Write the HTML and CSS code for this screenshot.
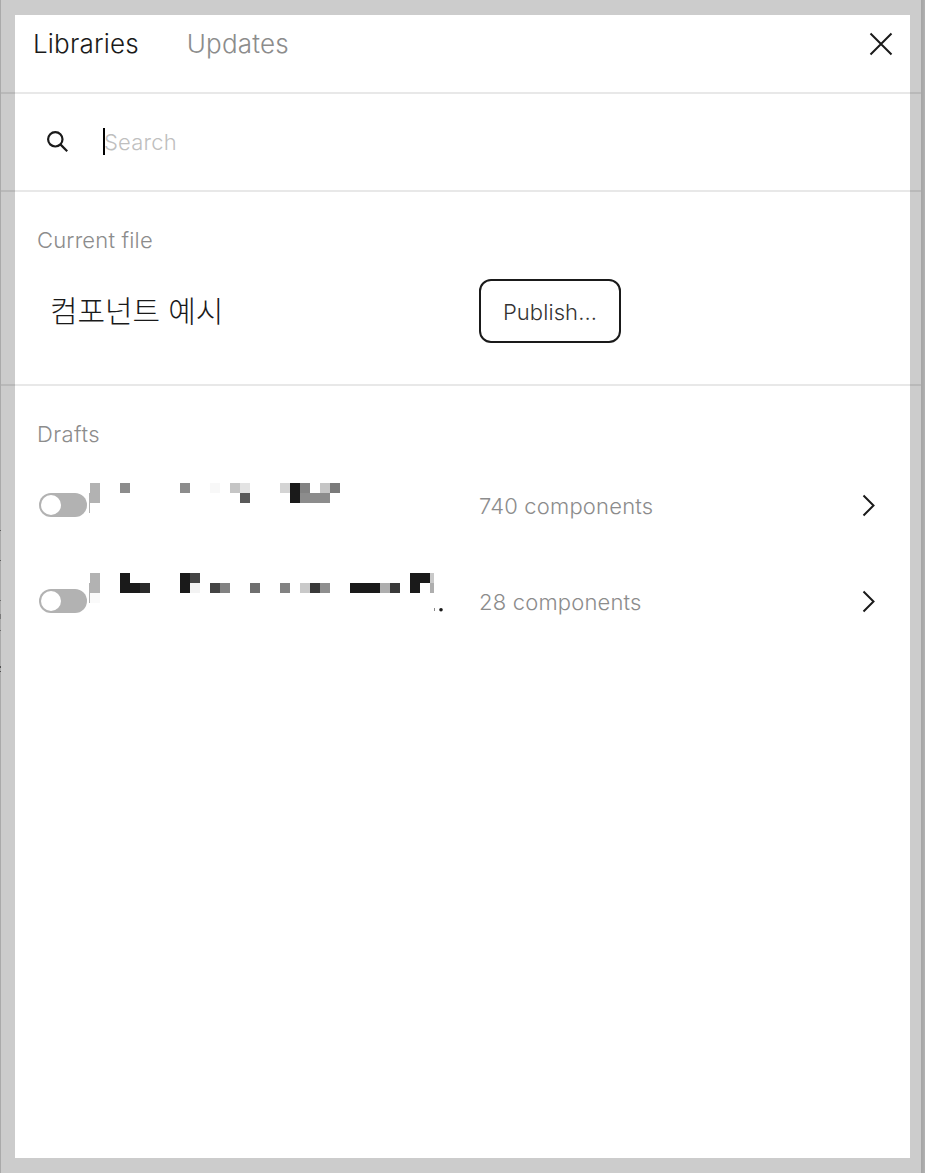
FILE: index.html
```html
<!DOCTYPE html>
<html lang="ko">
<head>
  <meta charset="UTF-8" />
  <meta name="viewport" content="width=device-width, initial-scale=1.0"/>
  <title>Libraries</title>
  <link rel="stylesheet" href="styles.css">
</head>
<body>
  <div class="modal">

    <header class="tabs">
      <span class="tab active">Libraries</span>
      <span class="tab">Updates</span>
      <svg class="close" width="24" height="24" viewBox="0 0 24 24">
        <path d="M1.5 1.5L22.5 22.5M22.5 1.5L1.5 22.5" />
      </svg>
    </header>

    <div class="search">
      <svg class="search-icon" width="24" height="24" viewBox="0 0 24 24">
        <circle cx="9.3" cy="9.3" r="7.2" />
        <path d="M14.4 14.4L21.2 21.2" />
      </svg>
      <span class="caret"></span>
      <span class="placeholder">Search</span>
    </div>

    <section class="current">
      <h2>Current file</h2>
      <div class="row">
        <span class="file-name">컴포넌트 예시</span>
        <button type="button" class="publish">Publish...</button>
      </div>
    </section>

    <section class="drafts">
      <h2>Drafts</h2>

      <div class="row draft">
        <div class="library">
          <span class="toggle"></span>
          <svg class="mosaic" width="360" height="48" viewBox="89 481 360 48" shape-rendering="crispEdges">
            <path fill="#b2b2b2" d="M90 483h10v20h-10zM89 493h1v20h-1z" />
            <path fill="#8c8c8c" d="M120 483h10v10h-10zM180 483h10v10h-10zM300 493h30v10h-30z" />
            <path fill="#f8f8f8" d="M210 483h10v10h-10z" />
            <path fill="#c5c5c5" d="M230 483h10v10h-10zM320 483h10v10h-10z" />
            <path fill="#e3e3e3" d="M240 483h10v10h-10z" />
            <path fill="#595959" d="M240 493h10v10h-10z" />
            <path fill="#d4d4d4" d="M280 483h10v10h-10z" />
            <path fill="#1a1a1a" d="M290 483h10v20h-10z" />
            <path fill="#828282" d="M300 483h10v10h-10z" />
            <path fill="#7a7a7a" d="M330 483h10v10h-10z" />
          </svg>
        </div>
        <span class="count">740 components</span>
        <svg class="chevron" width="14" height="24" viewBox="0 0 14 24">
          <path d="M1.5 2.5L11.5 12.5L1.5 22.5" />
        </svg>
      </div>

      <div class="row draft">
        <div class="library">
          <span class="toggle"></span>
          <svg class="mosaic" width="360" height="48" viewBox="89 577 360 48" shape-rendering="crispEdges">
            <path fill="#b2b2b2" d="M90 573h10v20h-10zM89 583h1v20h-1z" />
            <path fill="#fafafa" d="M90 593h10v10h-10z" />
            <path fill="#f3f3f3" d="M190 583h10v10h-10z" />
            <path fill="#1a1a1a" d="M120 573h10v10h10v10h-20zM180 573h10v20h-10zM350 583h30v10h-30zM410 573h20v10h-10v10h-10z" />
            <path fill="#2a2a2a" d="M140 583h10v10h-10z" />
            <path fill="#444" d="M190 573h10v10h-10zM210 583h10v10h-10z" />
            <path fill="#828282" d="M220 583h10v10h-10zM280 583h10v10h-10z" />
            <path fill="#6f6f6f" d="M250 583h10v10h-10z" />
            <path fill="#c9c9c9" d="M300 583h10v10h-10zM430 573h4v10h-4z" />
            <path fill="#393939" d="M310 583h10v10h-10zM390 583h10v10h-10z" />
            <path fill="#8e8e8e" d="M320 583h10v10h-10z" />
            <path fill="#aeaeae" d="M380 583h10v10h-10zM430 583h4v10h-4z" />
            <path fill="#888" d="M434 608h1v3h-1z" />
            <circle cx="441" cy="609.7" r="1.8" fill="#1a1a1a" shape-rendering="auto" />
          </svg>
        </div>
        <span class="count">28 components</span>
        <svg class="chevron" width="14" height="24" viewBox="0 0 14 24">
          <path d="M1.5 2.5L11.5 12.5L1.5 22.5" />
        </svg>
      </div>
    </section>

  </div>
  <div class="frame"></div>
</body>
</html>
```
FILE: styles.css
```css
* {
  box-sizing: border-box;
}

body {
  margin: 0;
  height: 1173px;
  padding: 0 4px 0 1px;
  overflow: hidden;
  /* slivers of the page behind the window */
  background:
    linear-gradient(#777, #777) 0 530px / 1px 1px no-repeat,
    linear-gradient(#777, #777) 0 560px / 1px 1px no-repeat,
    linear-gradient(#888, #888) 0 600px / 1px 1px no-repeat,
    linear-gradient(#999, #999) 0 614px / 1px 5px no-repeat,
    linear-gradient(#888, #888) 0 630px / 1px 1px no-repeat,
    linear-gradient(#666, #666) 0 666px / 1px 2px no-repeat,
    linear-gradient(#666, #666) 0 671px / 1px 1px no-repeat,
    linear-gradient(to right, #d5d5d5 921px, #cecece 921px, #dedede 925px);
  font-family: Inter, "Noto Sans CJK KR", sans-serif;
  font-weight: 300;
  font-size: 22px;
  letter-spacing: 0.18px;
  color: #1a1a1a;
}

.modal {
  height: 1173px;
  background-color: #fff;
}

/* translucent border lying over the whole window */
.frame {
  position: absolute;
  inset: 0;
  border: 15px solid rgba(0, 0, 0, 0.2);
}

svg {
  display: block;
  fill: none;
}

.tabs {
  display: flex;
  align-items: center;
  height: 94px;
  padding: 0 28px 5px 32px;
  border-bottom: 2px solid #e8e8e8;
  gap: 48px;
}

.tab {
  font-size: 26px;
  line-height: 33px;
  color: #8c8c8c;
}

.tab.active {
  color: #1a1a1a;
}

.close {
  margin-left: auto;
  stroke: #1a1a1a;
  stroke-width: 2;
}

.search {
  display: flex;
  align-items: center;
  height: 98px;
  padding: 0 0 1px 45px;
  border-bottom: 2px solid #e8e8e8;
}

.search-icon {
  stroke: #1a1a1a;
  stroke-width: 2.2;
}

.caret {
  width: 2px;
  height: 27px;
  margin-left: 33px;
  background-color: #000;
}

.placeholder {
  margin-left: -1px;
  color: #bfbfbf;
}

h2 {
  margin: 0;
  padding-left: 36px;
  font-size: 22px;
  font-weight: 300;
  line-height: 32px;
  color: #8c8c8c;
}

.current {
  height: 194px;
  padding-top: 32px;
  border-bottom: 2px solid #e8e8e8;
}

.row {
  display: grid;
  grid-template-columns: 478px 1fr auto;
  align-items: center;
}

.current .row {
  margin-top: 23px;
}

.file-name {
  padding-left: 49px;
  font-size: 30px;
  line-height: 40px;
  letter-spacing: -0.1px;
}

.publish {
  justify-self: start;
  width: 142px;
  height: 64px;
  padding: 1px 0 0;
  border: 2px solid #1a1a1a;
  border-radius: 12px;
  background-color: #fff;
  font: inherit;
  letter-spacing: 0.1px;
  color: #333;
}

.drafts {
  padding-top: 32px;
}

.draft {
  height: 96px;
  padding-right: 45px;
}

.drafts h2 {
  margin-bottom: 7px;
  letter-spacing: 0.4px;
}

.library {
  display: flex;
  align-items: center;
  padding-left: 38px;
}

.toggle {
  width: 48px;
  height: 24px;
  padding: 2px;
  border-radius: 12px;
  background-color: #b2b2b2;
}

.toggle::before {
  content: "";
  display: block;
  width: 20px;
  height: 20px;
  border-radius: 50%;
  background-color: #fff;
}

.mosaic {
  margin-left: 2px;
  overflow: visible;
}

.count {
  padding-top: 1px;
  color: #8c8c8c;
}

.chevron {
  stroke: #1a1a1a;
  stroke-width: 2;
}
```
